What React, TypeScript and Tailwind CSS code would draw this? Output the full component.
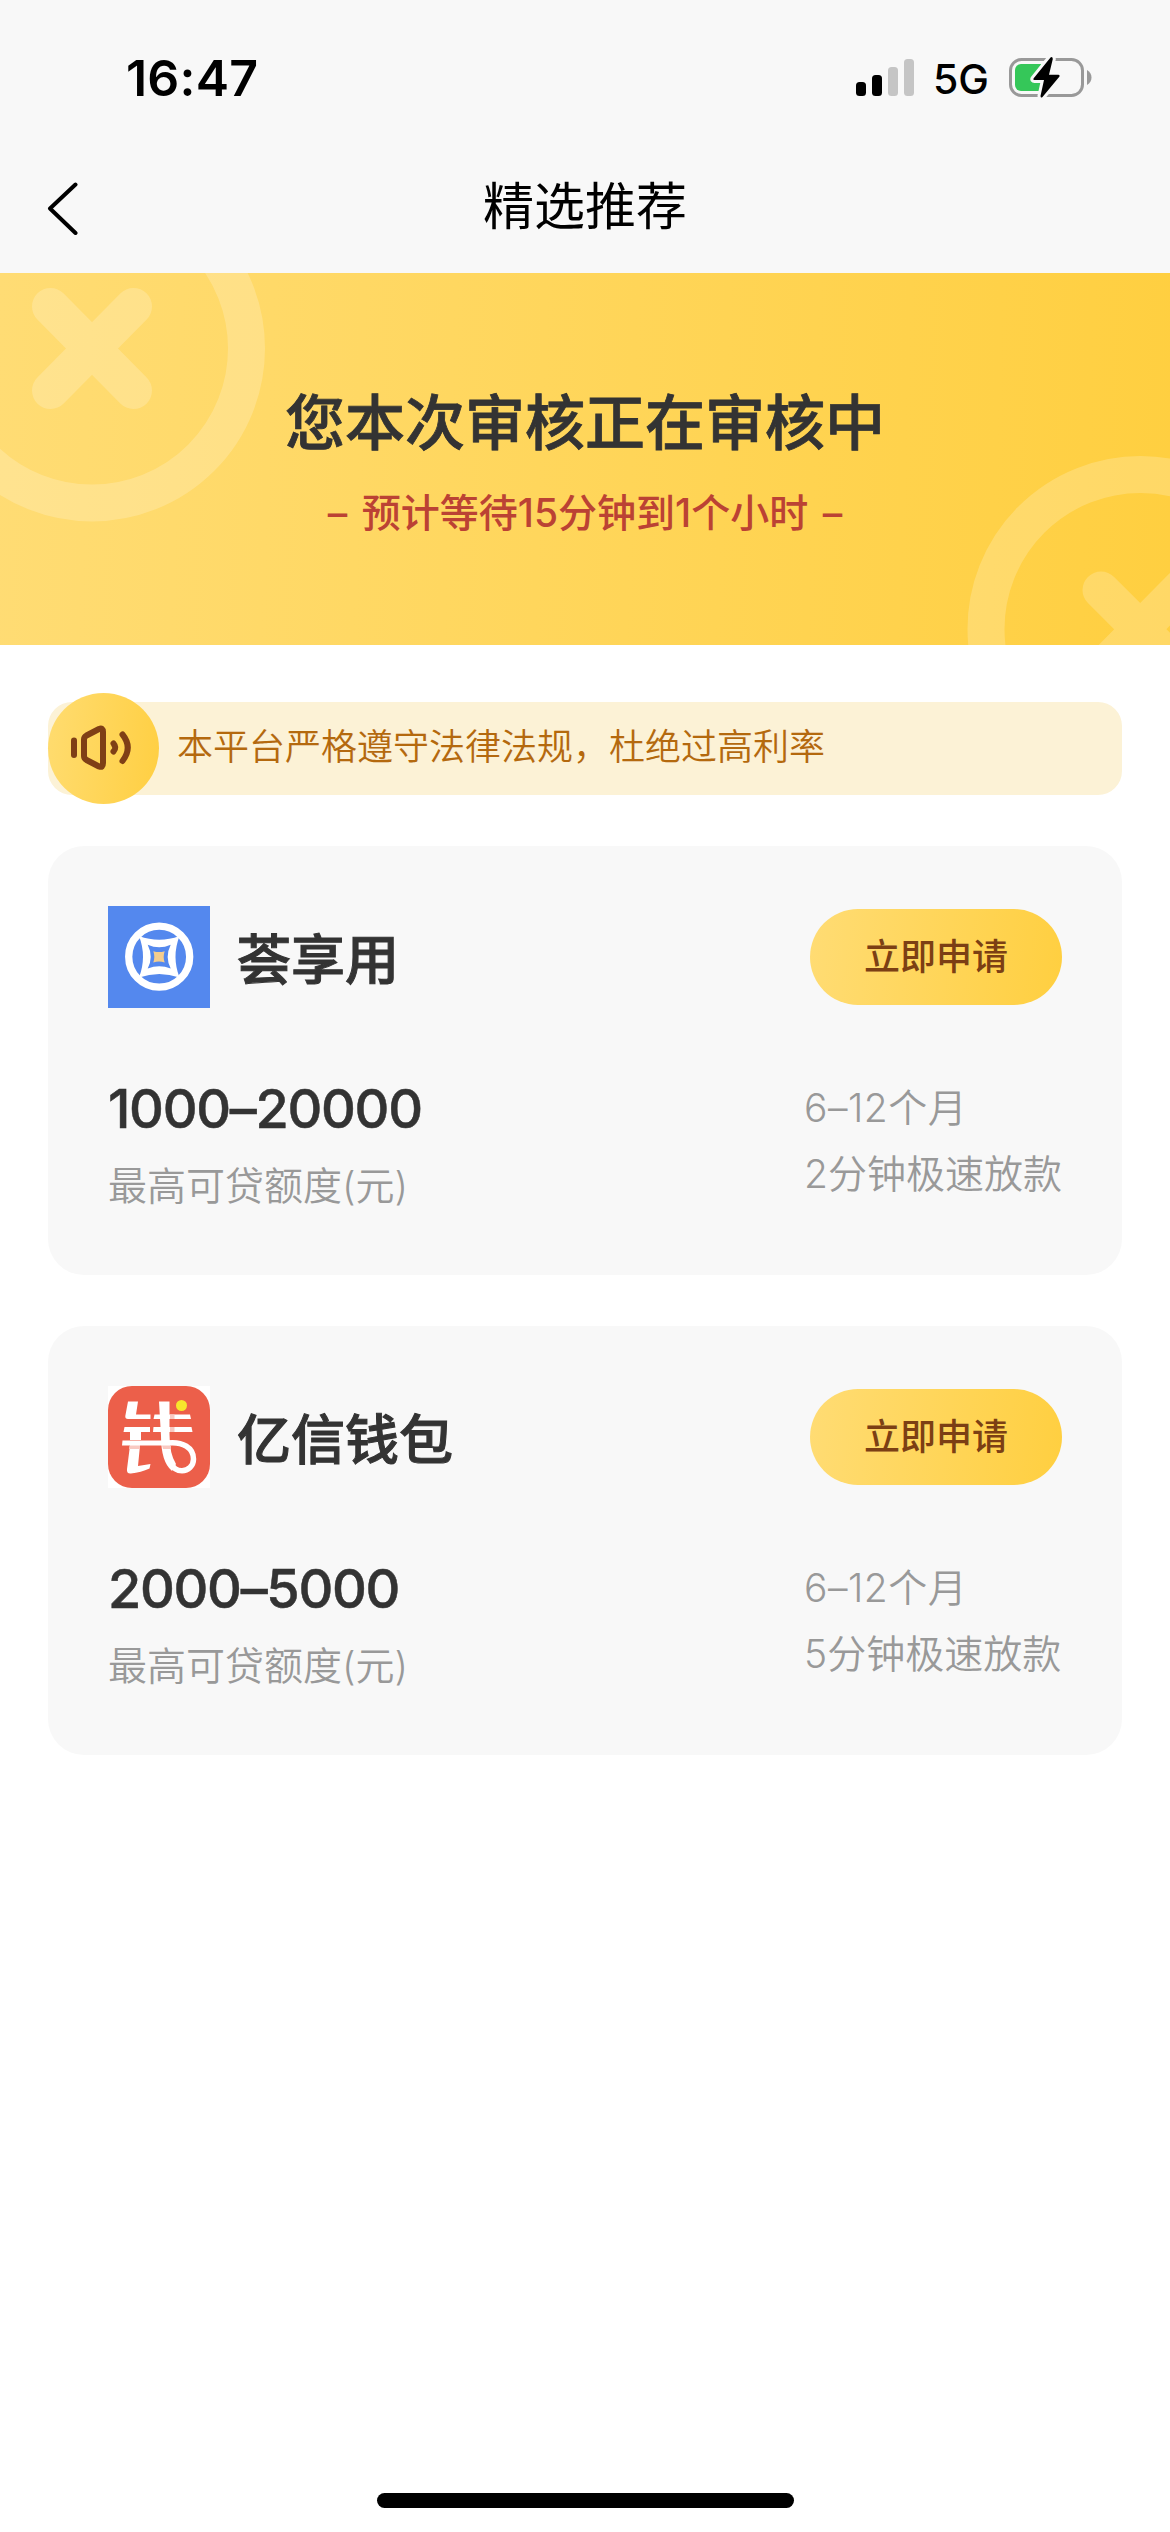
import React from "react";

const cjk = "font-['Inter','Noto_Sans_CJK_SC',sans-serif]";

function StatusBar() {
  return (
    <div className="flex h-[141px] items-start justify-between pl-[126px] pr-[78px]">
      <div className="mt-[48px] text-[50px] font-semibold leading-[60px] tracking-[0.2px] text-black">16:47</div>
      <div className="mt-[54px] flex h-[48px] items-center">
        <svg width="58" height="48" viewBox="0 0 58 48">
          <rect x="0" y="28" width="10" height="14" rx="3.5" fill="#000" />
          <rect x="16" y="21" width="10" height="21" rx="3.5" fill="#000" />
          <rect x="32" y="13" width="10" height="29" rx="3.5" fill="#c5c5c5" />
          <rect x="48" y="5" width="10" height="37" rx="3.5" fill="#c5c5c5" />
        </svg>
        <div className="ml-[19px] mt-[2px] w-[55px] text-[41px] font-medium leading-[48px] text-black">5G</div>
        <svg className="ml-[21px]" width="83" height="48" viewBox="0 0 83 48">
          <rect x="1.5" y="5.5" width="72" height="36" rx="11" fill="none" stroke="#999" strokeWidth="3" />
          <path d="M78 16c3 1.5 4.500 4.500 4.500 7.500s-1.500 6-4.500 7.500z" fill="#999" />
          <path d="M12 10h20v27H12a6 6 0 0 1-6-6V16a6 6 0 0 1 6-6z" fill="#35c759" />
          <path
            d="M41.500 3.500 L24.500 24.500 Q23.800 26 25.500 26 H35 L31.500 42 Q31.800 44.500 33.500 43 L50.500 22.500 Q51 21 49.500 20.800 H40 L43.800 5 Q43.500 2 41.500 3.500Z"
            fill="#000"
            stroke="#f8f8f8"
            strokeWidth="6"
            paintOrder="stroke"
          />
        </svg>
      </div>
    </div>
  );
}

function NavBar() {
  return (
    <div className="grid h-[132px] grid-cols-[1fr_auto_1fr] items-center px-[45px]">
      <svg width="36" height="56" viewBox="0 0 36 56">
        <path d="M30.500 5.500 5 29.500 30.500 54" fill="none" stroke="#000" strokeWidth="4" strokeLinecap="round" strokeLinejoin="round" />
      </svg>
      <h1 className="text-[51px] font-normal leading-[132px] text-black">精选推荐</h1>
      <span />
    </div>
  );
}

function Banner() {
  return (
    <div className="relative flex h-[372px] flex-col items-center overflow-hidden bg-[linear-gradient(92deg,#ffdc74_0%,#ffcf40_100%)]">
      <svg className="absolute inset-0" width="1170" height="372" viewBox="0 0 1170 372" fill="none">
        <g stroke="#fff" strokeOpacity="0.2" strokeWidth="37">
          <circle cx="92" cy="75.500" r="154.500" />
          <path d="M50.500 33.500 133.500 117.500M133.500 33.500 50.500 117.500" strokeLinecap="round" />
          <circle cx="1140.500" cy="356" r="154.500" />
          <path d="M1101 317 1182 398M1182 314 1099 398" strokeLinecap="round" />
        </g>
      </svg>
      <div className="relative mt-[105px] text-[60px] font-medium leading-[90px] text-[#333] [-webkit-text-stroke:0.8px_#333]">您本次审核正在审核中</div>
      <div className="relative mt-[15px] whitespace-pre text-[39px] font-medium leading-[60px] text-[#bb4234] [word-spacing:4px]">– 预计等待15分钟到1个小时 –</div>
    </div>
  );
}

function Notice() {
  return (
    <div className="mx-[48px] mt-[57px] flex h-[93px] items-center rounded-[24px] bg-[#fcf2d6]">
      <div className="flex size-[111px] shrink-0 items-center justify-center rounded-full bg-[linear-gradient(97deg,#ffdc70_0%,#ffcf42_100%)]">
        <svg width="111" height="111" viewBox="0 0 111 111" fill="none" stroke="#7f3f16" strokeLinecap="round" strokeLinejoin="round">
          <path d="M26 47.500V62" strokeWidth="6" />
          <path d="M38.500 42.500 51 36Q55 34.500 55 39V70Q55 75 51 73.500L38.500 67Q36 65.500 36 63V46.500Q36 44 38.500 42.500Z" strokeWidth="6" />
          <path d="M65.500 50.500Q69 54.500 65.500 58.500" strokeWidth="6" />
          <path d="M74.500 41.500Q85 54.500 74.500 68" strokeWidth="6" />
        </svg>
      </div>
      <div className="-mt-[3px] ml-[18px] text-[36px] font-[350] leading-[54px] text-[#b4690e]">本平台严格遵守法律法规，杜绝过高利率</div>
    </div>
  );
}

function CoinLogo() {
  return (
    <svg width="102" height="102" viewBox="0 0 102 102">
      <rect width="102" height="102" fill="#5488ee" />
      <circle cx="51.200" cy="50.700" r="30.500" fill="none" stroke="#fff" strokeWidth="7.300" />
      <path d="M31 30Q51.200 37.500 71.500 30Q63.500 50.700 71.500 71.500Q51.200 64.500 31 71.500Q39 50.700 31 30Z" fill="#fff" />
      <path d="M39.700 38.700Q51.200 43.700 62.700 38.700Q56.700 50.700 62.700 62.500Q51.200 58 39.700 62.500Q45.700 50.700 39.700 38.700Z" fill="#5488ee" />
      <path d="M45.300 45.200Q51 47 56.700 45.200Q54.700 50.700 56.700 56.400Q51 54.500 45.300 56.400Q47.300 50.700 45.300 45.200Z" fill="#f5cd8d" />
    </svg>
  );
}

function WalletLogo() {
  return (
    <svg width="102" height="102" viewBox="0 0 102 102">
      <rect width="102" height="102" fill="#fff" />
      <rect width="102" height="102" rx="24" fill="#ec5f4a" />
      <g fill="#fff">
        <path d="M20 15.500H30L28 28.500H42.500V33H20Q17 33 17.300 30Z" />
        <path d="M16.500 41H42V46H33V54H22V46H15.500Z" />
        <path d="M14.500 54.500H62V59.500H32L30 80L42.500 78L41.500 82.500Q33 86.500 23 87.500Q18.500 88 19 83L22 59.500H14Z" />
        <path d="M46.500 28.500H82L83 33H45.500Z" />
        <path d="M45.500 41H83.500L84.500 46H45Z" />
        <path d="M51 15.500H61.500V48Q61.500 68 68 78L64 85Q53 76 53 50Z" />
      </g>
      <path d="M59 57C75 55 85.500 62 85.500 73C85.500 80 80 84.800 74 84.800C69 84.800 65 82 62.500 77" fill="none" stroke="#fff" strokeWidth="5.500" />
      <path d="M21.500 59.500H32V63H21ZM62 28.500H66.500V33H62ZM62 41H66.500V46H62ZM54 59.500H63V63H55Z" fill="#f9c9c1" />
      <circle cx="73.500" cy="19.500" r="5.500" fill="#f7e62c" />
    </svg>
  );
}

type Loan = { name: string; amount: string; term: string; speed: string; logo: React.ReactNode };

const loans: Loan[] = [
  { name: "荟享用", amount: "1000–20000", term: "6–12个月", speed: "2分钟极速放款", logo: <CoinLogo /> },
  { name: "亿信钱包", amount: "2000–5000", term: "6–12个月", speed: "5分钟极速放款", logo: <WalletLogo /> },
];

function LoanCard({ loan }: { loan: Loan }) {
  return (
    <div className="h-[429px] rounded-[36px] bg-[#f8f8f8] px-[60px] pt-[60px]">
      <div className="flex h-[102px] items-center">
        {loan.logo}
        <div className="ml-[27px] mt-[8px] text-[54px] font-medium leading-[80px] text-[#333] [-webkit-text-stroke:1px_#333]">{loan.name}</div>
        <button className="ml-auto h-[96px] w-[252px] rounded-full bg-[linear-gradient(97deg,#ffdc74_0%,#ffcf40_100%)] text-[36px] font-medium leading-[96px] text-[#7c3f14]">
          立即申请
        </button>
      </div>
      <div className="mt-[66px] flex justify-between">
        <div>
          <div className="text-[54px] font-medium leading-[70px] tracking-[-1.3px] text-[#333] [-webkit-text-stroke:0.5px_#333]">{loan.amount}</div>
          <div className="mt-[14px] text-[39px] font-[350] leading-[56px] text-[#999]">最高可贷额度(元)</div>
        </div>
        <div className="mt-[1px] w-[258px] whitespace-nowrap text-[39px] font-[350] leading-[66px] text-[#999]">
          <div className="tracking-[0.5px]">{loan.term}</div>
          <div>{loan.speed}</div>
        </div>
      </div>
    </div>
  );
}

export default function App() {
  return (
    <div className={`${cjk} flex h-[2532px] w-[1170px] flex-col overflow-hidden bg-white`}>
      <header className="bg-[#f8f8f8]">
        <StatusBar />
        <NavBar />
      </header>
      <Banner />
      <Notice />
      <main className="mt-[51px] flex flex-col gap-[51px] px-[48px]">
        {loans.map((loan) => (
          <LoanCard key={loan.name} loan={loan} />
        ))}
      </main>
      <div className="mx-auto mb-[24px] mt-auto h-[15px] w-[417px] rounded-full bg-black" />
    </div>
  );
}
